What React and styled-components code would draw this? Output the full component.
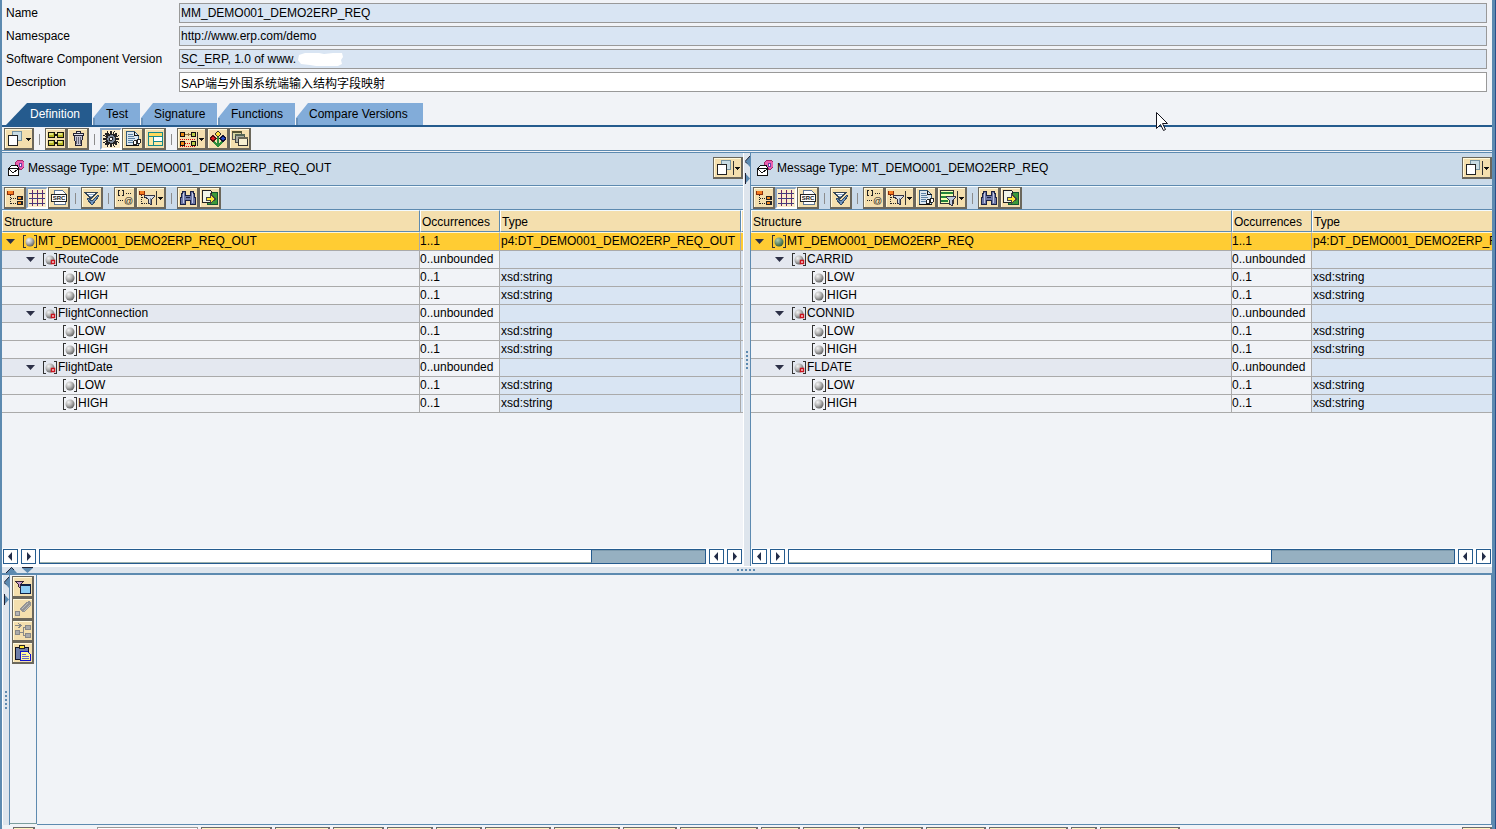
import React, { useState } from 'react';
import styled, { createGlobalStyle, css } from 'styled-components';

const BLUE = '#5d8ab0';
const NAVY = '#255b8e';
const PANEL = '#cadae9';
const PAGE = '#f1f3f7';
const SAND = '#f4dfae';

const GlobalStyle = createGlobalStyle`
  * {
    box-sizing: border-box;
  }
  body {
    margin: 0;
    background: ${PAGE};
  }
  body, input, button, table {
    font: 12px/16px "Liberation Sans", Arial, "Noto Sans CJK SC", sans-serif;
    color: #000;
  }
  svg {
    display: block;
    flex: none;
  }
`;

const Window = styled.div`
  height: 100vh;
  overflow: hidden;
  position: relative;
  display: flex;
  flex-direction: column;
  background: ${PAGE};
  border-left: 2px solid ${BLUE};
  border-right: 1px solid #28508a;
`;

const Content = styled.div`
  flex: 1;
  min-height: 0;
  display: flex;
  flex-direction: column;
  border-right: 3px solid ${BLUE};
`;

const Fields = styled.div`
  display: grid;
  grid-template-columns: 173px 1fr;
  row-gap: 3px;
  align-items: center;
  padding: 3px 5px 11px 4px;
  & label {
    white-space: nowrap;
  }
`;

const FieldBox = styled.div`
  position: relative;
`;

const FieldInput = styled.input`
  display: block;
  width: 100%;
  height: 20px;
  padding: 0 1px;
  border: 1px solid #999;
  border-radius: 0;
  outline: none;
  background: ${(props) => (props.readOnly ? '#d9e5f3' : '#fff')};
`;

const Smudge = styled.svg`
  position: absolute;
  left: 119px;
  top: 3px;
`;

const TabBar = styled.div`
  display: flex;
  height: 24px;
  padding-left: 4px;
  border-bottom: 2px solid ${NAVY};
`;

const Tab = styled.button`
  width: ${(props) => props.$width}px;
  height: 22px;
  padding: 0 0 0 14px;
  border: 0;
  text-align: left;
  white-space: nowrap;
  background: linear-gradient(90deg, #6b93bb 3px, transparent 3px) 0 15px / 3px 7px no-repeat #82acd9;
  clip-path: polygon(1px 15px, 13px 0, 100% 0, 100% 100%, 1px 100%);
  ${(props) =>
    props.$active &&
    css`
      color: #fff;
      padding-left: 24px;
      background: ${NAVY};
      clip-path: polygon(0 100%, 21px 0, 100% 0, 100% 100%);
    `}
`;

const ToolBar = styled.div`
  display: flex;
  align-items: center;
  height: 24px;
  padding: 0 2px;
`;

const MainTools = styled(ToolBar)`
  height: 26px;
  padding-top: 1px;
  border-bottom: 3px double ${BLUE};
`;

const Separator = styled.span`
  width: 11px;
  height: 11px;
  background: linear-gradient(#8c8c8c, #8c8c8c) 5px 0 / 1px 11px no-repeat;
`;

const Tool = styled.button`
  flex: none;
  width: ${(props) => (props.$wide ? 30 : 22)}px;
  height: 22px;
  padding: 0;
  display: flex;
  align-items: center;
  justify-content: center;
  border: 1px solid #6b675c;
  border-right-width: 2px;
  border-bottom-width: 2px;
  background: ${SAND};
  box-shadow: inset 1px 1px #fff8dc;
  ${(props) =>
    props.$pressed &&
    css`
      border: 2px solid;
      border-color: #8aa5c2 #fff #fff #8aa5c2;
      background: #fbedca;
      box-shadow: none;
    `}
`;

const Panes = styled.div`
  flex: 1;
  min-height: 0;
  display: grid;
  grid-template-columns: minmax(0, 1fr) 8px minmax(0, 1fr);
`;

const Pane = styled.section`
  display: flex;
  flex-direction: column;
  min-height: 0;
  overflow: hidden;
`;

const PaneHeader = styled.header`
  display: flex;
  align-items: center;
  gap: 4px;
  height: 33px;
  padding: 0 0 2px 6px;
  background: ${PANEL};
  border-bottom: 1px solid ${BLUE};
  & h2 {
    flex: 1;
    margin: 0;
    font-size: 12px;
    font-weight: 400;
  }
`;

const PaneTools = styled(ToolBar)`
  background: ${PANEL};
  border-top: 1px solid #f3fbff;
  border-bottom: 1px solid ${BLUE};
`;

const TreeTable = styled.table`
  width: 100%;
  table-layout: fixed;
  border-collapse: separate;
  border-spacing: 0;
  white-space: nowrap;
`;

const Th = styled.th`
  height: 22px;
  padding: 2px 0 0 1px;
  text-align: left;
  font-weight: 400;
  overflow: hidden;
  background: ${SAND};
  border-top: 1px solid #f3fbff;
  border-left: 1px solid #fff;
  border-right: ${(props) => (props.$last ? 0 : 1)}px solid ${BLUE};
  border-bottom: 1px solid ${BLUE};
`;

const Tr = styled.tr`
  & td {
    height: 18px;
    padding: 0;
    overflow: hidden;
    line-height: 17px;
    border-right: 1px solid #aaa;
    border-bottom: 1px solid #aaa;
    background: ${PAGE};
  }
  & td:first-child {
    background: ${(props) => (props.$level === 1 ? '#e4e8f0' : PAGE)};
  }
  & td:nth-child(n + 3) {
    padding-left: 1px;
    background: #d9e5f3;
  }
  & td:last-child {
    border-right: 0;
  }
  ${(props) =>
    props.$level === 0 &&
    css`
      && td {
        height: 19px;
        border-top: 1px solid #fff6d5;
        background: #ffcc33;
      }
    `}
`;

const Node = styled.div`
  display: flex;
  align-items: center;
  height: 17px;
  padding-left: ${(props) => props.$level * 20 + 4}px;
`;

const Toggle = styled.button`
  width: 17px;
  height: 16px;
  padding: 0;
  border: 0;
  background: none;
`;

const Blank = styled.span`
  width: 17px;
`;

const ScrollRow = styled.div`
  display: flex;
  align-items: center;
  gap: 3px;
  margin-top: auto;
  padding: 1px 1px 2px;
  background: #fbfcfe;
`;

const ScrollButton = styled.button`
  flex: none;
  display: flex;
  align-items: center;
  justify-content: center;
  width: 15px;
  height: 15px;
  padding: 0;
  border: 1px solid ${NAVY};
  background: #fff;
`;

const Track = styled.div`
  flex: 1;
  display: flex;
  height: 15px;
  border: 1px solid ${NAVY};
  background: #96b0c1;
  box-shadow: inset 0 1px #7e9bae;
`;

const Thumb = styled.div`
  background: #fff;
  border-right: 1px solid ${NAVY};
  border-bottom: 1px solid #9bb0ac;
`;

const VSplitter = styled.div`
  position: relative;
  display: flex;
  flex-direction: column;
  align-items: center;
  justify-content: center;
  background: #dee5ed;
  border-left: 1px solid #fff;
  border-right: 1px solid ${BLUE};
`;

const HSplitter = styled.div`
  position: relative;
  flex: none;
  display: flex;
  align-items: center;
  justify-content: center;
  height: 9px;
  background: #dee5ed;
  border-top: 1px solid #fff;
  border-bottom: 2px solid ${BLUE};
`;

const VArrows = styled.svg`
  position: absolute;
  right: 0;
  top: ${(props) => props.$top}px;
`;

const HArrows = styled.svg`
  position: absolute;
  left: 4px;
  top: 0;
`;

const Lower = styled.div`
  flex: none;
  display: grid;
  grid-template-columns: 8px 27px 1fr;
  height: 254px;
`;

const SideTools = styled.div`
  display: flex;
  flex-direction: column;
  align-items: center;
  height: 249px;
  padding-top: 1px;
  border-right: 1px solid ${BLUE};
  border-bottom: 1px solid #7b9d9d;
`;

const Canvas = styled.div`
  height: 250px;
  border-right: 1px solid ${BLUE};
  border-bottom: 1px solid ${BLUE};
`;

const FunctionBar = styled.div`
  grid-column: 2 / 4;
  display: flex;
  gap: 3px;
  height: 4px;
  padding: 2px 0 0 3px;
  overflow: hidden;
`;

const FunctionButton = styled.button`
  flex: none;
  width: ${(props) => props.$width}px;
  height: 22px;
  padding: 0;
  border: 1px solid #6b6b6b;
  border-right-width: 2px;
  background: #fff3c0;
  &:last-child {
    margin-left: auto;
  }
`;

const CategorySelect = styled.select`
  flex: none;
  width: 101px;
  height: 22px;
  margin-left: 59px;
  appearance: none;
  border: 1px solid #999;
  border-radius: 0;
  background: #fff;
`;

const Cursor = styled.svg`
  position: absolute;
  left: 77.3%;
  top: 112px;
  pointer-events: none;
`;

const drawings = {
  windows: (
    <>
      <path d="M5.500 .5h9v9h-9z" fill="#c8dce4" stroke="#7794a2" />
      <path d="M1.500 4.500h9v10h-9z" fill="#fff" stroke="#222" />
    </>
  ),
  mapping: (
    <>
      <path d="M0 1h7v6H0zM9 1h7v6H9zM0 9h7v6H0zM9 9h7v6H9zM7 3h2v2H7zM7 11h2v2H7z" fill="#16160c" />
      <path d="M1 2h5v4H1zM10 2h5v4h-5zM1 10h5v4H1zM10 10h5v4h-5z" fill="#b8b826" />
      <path d="M1 2h4v2H1zM10 2h4v2h-4zM1 10h4v2H1zM10 10h4v2h-4z" fill="#e4e480" />
    </>
  ),
  trash: (
    <>
      <path d="M4.500 4.500h8l-1 10h-6z" fill="#c5c5d4" stroke="#223" />
      <path d="M3.500 2.500h10v2h-10zM6.500 .5h4v2h-4z" fill="#e4e4ee" stroke="#223" />
      <path d="M6.500 6v7M8.500 6v7M10.500 6v7" stroke="#667" />
    </>
  ),
  gear: (
    <>
      <path
        d="M7 0h2v3H7zM7 13h2v3H7zM0 7h3v2H0zM13 7h3v2h-3zM2 2h2l2 2-2 2-2-3zM14 2v2l-2 2-2-2 2-2zM2 14v-2l2-2 2 2-2 2zM14 14h-2l-2-2 2-2 2 2zM4 0h1l1 3H5zM11 0h1l-1 3h-1zM4 16h1l1-3H5zM11 16h1l-1-3h-1zM0 4v1l3 1V5zM0 11v1l3-1v-1zM16 4v1l-3 1V5zM16 11v1l-3-1v-1z"
        fill="#222"
      />
      <circle cx="8" cy="8" r="4.500" fill="#7a8797" stroke="#222" strokeWidth="1.500" />
      <circle cx="8" cy="8" r="1.500" fill="#fff" stroke="#222" />
    </>
  ),
  textview: (
    <>
      <path d="M1.500 .5h8l4 4v10h-12z" fill="#dbe7ef" stroke="#345b7c" />
      <path d="M9.500 .5v4h4M1 14.500h13" stroke="#111" fill="none" />
      <path d="M3 3.500h5M3 5.500h6M3 7.500h7M3 9.500h5M3 11.500h5" stroke="#5d82a5" />
      <path d="M9.500 9.500h2v4h-3v-3zM12.500 8.500h3v3l-1 1h-2z" fill="#fff" stroke="#222" />
    </>
  ),
  layout: (
    <>
      <path d="M1 1h15v14H1z" fill="#16888c" />
      <path d="M2 2h13v3H2z" fill="#ffd95c" />
      <path d="M2 6h4v8H2z" fill="#ffe9a0" />
      <path d="M7 6h8v4H7z" fill="#fff" />
      <path d="M7 11h8v3H7z" fill="#ffe9a0" />
    </>
  ),
  links: (
    <>
      <path d="M5 3.500h6M8.500 2v3" stroke="#8d7440" />
      <path d="M0 8.500h16M5 12.500h6M0 15.500h16" stroke="#d00" strokeDasharray="1 1" />
      <path d="M0 1h5v5H0zM0 10h5v5H0zM11 1h5v5h-5zM11 10h5v5h-5z" fill="#111" />
      <path d="M1 2h3v3H1zM1 11h3v3H1z" fill="#f08a12" />
      <path d="M12 2h3v3h-3zM12 11h3v3h-3z" fill="#b8cb48" />
    </>
  ),
  flower: (
    <>
      <path d="M8 6v9M3 10l5 5 5-5" stroke="#2c8d3c" strokeWidth="1.500" fill="none" />
      <path d="M8 0l3 3-3 3-3-3z" fill="#ffe03a" stroke="#333" />
      <path d="M3 4.500l3 3-3 3-3-3z" fill="#e32020" stroke="#511" />
      <path d="M13 4.500l3 3-3 3-3-3z" fill="#2449c9" stroke="#113" />
    </>
  ),
  cascade: (
    <>
      <path d="M.5 .5h9v8h-9z" fill="#d7d7a2" stroke="#555" />
      <path d="M0 1h10" stroke="#553" strokeWidth="2" />
      <path d="M3.500 3.500h9v8h-9z" fill="#a8aca2" stroke="#444" />
      <path d="M3 4h10" stroke="#565" strokeWidth="2" />
      <path d="M6.500 6.500h9v8h-9z" fill="#f8efd0" stroke="#333" />
      <path d="M6 7h10" stroke="#665" strokeWidth="2" />
    </>
  ),
  tree: (
    <>
      <path d="M3.500 5v10" stroke="#222" strokeDasharray="1 1" />
      <path d="M4 8.500h6M4 13.500h6" stroke="#222" strokeDasharray="1 1" />
      <path d="M0 1h7v4H0z" fill="#8c2e0c" />
      <path d="M1 1h5v3H1z" fill="#f47b20" />
      <path d="M10 6h6v4h-6zM10 11h6v4h-6z" fill="#222" />
      <path d="M11 7h3v2h-3zM11 12h3v2h-3z" fill="#f48a20" />
    </>
  ),
  grid: (
    <>
      <path d="M3.500 0v16M8.500 0v16M13.500 0v16" stroke="#6d2466" />
      <path d="M0 3.500h16M0 8.500h16M0 13.500h16" stroke="#40407e" />
    </>
  ),
  source: (
    <>
      <path d="M3.500 .5h8l3 3v11h-11z" fill="#fff" stroke="#5d7594" />
      <path d="M.5 4.500h15v7H.5z" fill="#fff" stroke="#222" />
      <text x="8" y="10" textAnchor="middle" fontSize="6" fontWeight="700" fill="#111">
        SRC
      </text>
    </>
  ),
  expand: (
    <>
      <path d="M1 2.500h12l-6 6z" fill="#fff" stroke="#345" />
      <path d="M4 8l4 3 6-6 1 1-7 9-5-6z" fill="#6f94bd" stroke="#334b66" />
      <path d="M4 4.500h6M6 6.500h2" stroke="#8aa9ca" />
    </>
  ),
  attributes: (
    <>
      <path d="M3 .5H1.500v5H3M5 .5h1.500v5H5" stroke="#222" fill="none" />
      <path d="M9 3.500h6M1 10.500h6" stroke="#222" strokeDasharray="1 1" />
      <text x="7" y="14" fontSize="9" fill="#222">
        @
      </text>
    </>
  ),
  filterTree: (
    <>
      <path d="M2.500 5v10M3 7.500h3M3 13.500h5" stroke="#222" strokeDasharray="1 1" />
      <path d="M0 1h6v4H0z" fill="#8c2e0c" />
      <path d="M1 1h4v3H1z" fill="#f47b20" />
      <path d="M5.500 5.500h10v1l-3 3v5l-3-1v-4l-4-3z" fill="#d6dde4" stroke="#334" />
      <path d="M11.500 8v6" stroke="#7888a0" />
    </>
  ),
  filterTable: (
    <>
      <path d="M.5 .5h13v13H.5z" fill="#f4ffb0" stroke="#333" />
      <path d="M1 3h12M1 7h6M1 11h7" stroke="#24843c" strokeWidth="2" />
      <path d="M6.500 6.500h9v1l-3 3v5l-3-1v-4l-3-3z" fill="#bcc8dc" stroke="#334" />
    </>
  ),
  binoculars: (
    <>
      <path d="M2.500 1.500h3v4h5v-4h3l2 8v5h-5v-4h-5v4h-5v-5z" fill="#6c76a5" stroke="#1c2242" />
      <path d="M3 3v10M12 3v10" stroke="#c3c9e2" />
      <path d="M6 7h4" stroke="#1c2242" />
    </>
  ),
  exportDoc: (
    <>
      <path d="M5.500 2.500h10v12h-10z" fill="#3c9a38" stroke="#153" />
      <path d="M.5 .5h8l1 1v11h-9z" fill="#f2f6e8" stroke="#222" />
      <path d="M4 7h4V3.500L13.500 9 8 14v-3.500H4z" fill="#ffe836" stroke="#444" />
    </>
  ),
  filterWindow: (
    <>
      <path d="M5.500 5.500h10v9h-10z" fill="#8ccdf4" stroke="#124" />
      <path d="M5 5.500h11" stroke="#124" strokeWidth="2" />
      <path d="M.5 2.500h8l-3 3v4l-2-2v-2z" fill="#c79acb" stroke="#323" />
    </>
  ),
  marker: (
    <>
      <path d="M4 8l6-6 4-2 2 2v3l-7 6H7z" fill="#949494" />
      <path d="M7 8l6-6M9 10l6-6" stroke="#bdbdbd" />
      <path d="M.5 10.500h4v4h-4z" fill="#b5b5b5" stroke="#888" />
    </>
  ),
  sourceTree: (
    <>
      <path d="M0 2.500h6M3.500 .5L6 2.500 3.500 5M5 9.500h3M8.500 4v9M8 4.500h3M8 12.500h3" stroke="#888" fill="none" />
      <path d="M.5 7.500h4v4h-4zM10.500 2.500h5v4h-5zM10.500 10.500h5v4h-5z" fill="#aaa" stroke="#888" />
    </>
  ),
  clipboard: (
    <>
      <path d="M.5 2.500h13v12H.5z" fill="#6e7ea8" stroke="#112" />
      <path d="M4.500 .5h5v3h-5z" fill="#ffe836" stroke="#222" />
      <path d="M5.500 6.500h7l3 3v6h-10z" fill="#fff79a" stroke="#11c" />
      <path d="M7 9.500h4M7 11.500h7M7 13.500h7" stroke="#66c" />
    </>
  ),
  message: (
    <>
      <path d="M7 3l3-3h4l2 2v5l-3 3-3-2z" fill="#ec5fae" stroke="#a02868" />
      <path d="M11 3h2v3h-2z" fill="#fff" stroke="#6a3fa8" />
      <path d="M.5 8.500l3-3h6l1 3v7H.5z" fill="#fff" stroke="#111" />
      <path d="M1 9.500l4 3 5-3M1 8.500h9" fill="none" stroke="#111" />
    </>
  ),
};

const Icon = ({ name }) => (
  <svg width="16" height="16" viewBox="0 0 16 16" fill="none" shapeRendering="crispEdges" aria-hidden="true">
    {drawings[name]}
  </svg>
);

const ToolButton = ({ icon, label, drop, split, pressed }) => (
  <Tool type="button" aria-label={label} title={label} $wide={drop} $pressed={pressed}>
    <Icon name={icon} />
    {drop && (
      <svg width="8" height="16" shapeRendering="crispEdges" aria-hidden="true">
        {split && <path d="M1.500 1v14" stroke="#333" />}
        <path d="M3 7h5v1H7v1H6v1H5V9H4V8H3z" fill="#111" />
      </svg>
    )}
  </Tool>
);

const renderTools = (items) =>
  items.map((item, i) => (item ? <ToolButton key={item.label} {...item} /> : <Separator key={`sep-${i}`} />));

const mainTools = [
  { icon: 'windows', label: 'Switch view', drop: true },
  null,
  { icon: 'mapping', label: 'Map selected fields' },
  { icon: 'trash', label: 'Delete' },
  null,
  { icon: 'gear', label: 'Show functions', pressed: true },
  { icon: 'textview', label: 'Text preview' },
  { icon: 'layout', label: 'Layout' },
  null,
  { icon: 'links', label: 'Dependencies', drop: true, split: true },
  { icon: 'flower', label: 'Documentation' },
  { icon: 'cascade', label: 'Cascade' },
];

const baseTools = [
  { icon: 'tree', label: 'Tree' },
  { icon: 'grid', label: 'Grid', pressed: true },
  { icon: 'source', label: 'Source' },
  null,
  { icon: 'expand', label: 'Expand' },
  null,
  { icon: 'attributes', label: 'Attributes' },
  { icon: 'filterTree', label: 'Filter tree', drop: true, split: true },
];

const searchTools = [null, { icon: 'binoculars', label: 'Find' }, { icon: 'exportDoc', label: 'Export' }];

const targetTools = [
  { icon: 'textview', label: 'Text view' },
  { icon: 'filterTable', label: 'Filter table', drop: true, split: true },
];

const sideTools = [
  { icon: 'filterWindow', label: 'Filter window' },
  { icon: 'marker', label: 'Mark' },
  { icon: 'sourceTree', label: 'Insert source' },
  { icon: 'clipboard', label: 'Paste' },
];

const tabs = [
  { name: 'Definition', width: 86 },
  { name: 'Test', width: 48 },
  { name: 'Signature', width: 77 },
  { name: 'Functions', width: 78 },
  { name: 'Compare Versions', width: 128 },
];

const functionWidths = [71, 55, 51, 46, 46, 66, 66, 54, 78, 39, 57, 60, 60, 79, 26, 80, 30];

const buildRows = (root, type, groups) => [
  { name: root, level: 0, occurs: '1..1', type },
  ...groups.flatMap((name) => [
    { name, level: 1, occurs: '0..unbounded', type: '' },
    { name: 'LOW', level: 2, occurs: '0..1', type: 'xsd:string' },
    { name: 'HIGH', level: 2, occurs: '0..1', type: 'xsd:string' },
  ]),
];

const NodeIcon = ({ repeated, mapped }) => (
  <svg width="15" height="14" viewBox="0 0 15 14" aria-hidden="true">
    <defs>
      <radialGradient id="ball" cx="35%" cy="30%" r="75%">
        <stop offset="0" stopColor="#f4f4f4" />
        <stop offset=".5" stopColor="#b4b4b4" />
        <stop offset="1" stopColor="#5c5c5c" />
      </radialGradient>
      <radialGradient id="greenBall" cx="35%" cy="30%" r="75%">
        <stop offset="0" stopColor="#b4cfae" />
        <stop offset="1" stopColor="#2f5a38" />
      </radialGradient>
    </defs>
    <path d="M3 .5H.5v12H3M11 .5h2.500v12H11" stroke="#333" fill="none" shapeRendering="crispEdges" />
    <circle cx="7" cy="7" r="4.500" fill={mapped ? 'url(#greenBall)' : 'url(#ball)'} />
    {repeated && <path d="M8.500 7.500h3v3h-3z" fill="#fff" stroke="#c8141e" strokeWidth="1.500" />}
  </svg>
);

const splitDots = [0, 4, 8, 12, 16];

const SplitArrows = ({ top }) => (
  <VArrows $top={top} width="5" height="28" aria-hidden="true">
    <path d="M5 0v11L0 5.500z" fill={BLUE} />
    <path d="M5 0L0 5.500 2 7.500" stroke="#223" fill="none" />
    <path d="M0 17v11l5-5.500z" fill={BLUE} />
    <path d="M.5 28V17" stroke="#223" />
  </VArrows>
);

const VerticalDots = () => (
  <svg width="4" height="18" shapeRendering="crispEdges" aria-hidden="true">
    {splitDots.map((y) => (
      <path key={y} d={`M1 ${y}h2v2H1z`} fill={BLUE} />
    ))}
  </svg>
);

const ScrollArrow = ({ label, left }) => (
  <ScrollButton type="button" aria-label={label}>
    <svg width="5" height="9" aria-hidden="true">
      <path d={left ? 'M4 0v9L0 4.500z' : 'M1 0v9l4-4.500z'} fill="#222c48" />
    </svg>
  </ScrollButton>
);

const ScrollBar = ({ thumb }) => (
  <ScrollRow>
    <ScrollArrow label="Scroll left" left />
    <ScrollArrow label="Scroll right" />
    <Track>
      <Thumb style={{ width: `${thumb}%` }} />
    </Track>
    <ScrollArrow label="Page left" left />
    <ScrollArrow label="Page right" />
  </ScrollRow>
);

const MessagePane = ({ title, rows, tools, typeWidth, filler, mapped, thumb }) => (
  <Pane>
    <PaneHeader>
      <Icon name="message" />
      <h2>Message Type: {title}</h2>
      <ToolButton icon="windows" label="Switch view" drop split />
    </PaneHeader>
    <PaneTools>{renderTools(tools)}</PaneTools>
    <TreeTable>
      <colgroup>
        <col />
        <col width="80" />
        <col width={typeWidth} />
        {filler && <col width="2" />}
      </colgroup>
      <thead>
        <tr>
          <Th>Structure</Th>
          <Th>Occurrences</Th>
          <Th $last={!filler}>Type</Th>
          {filler && <Th $last aria-hidden="true" />}
        </tr>
      </thead>
      <tbody>
        {rows.map((row, i) => (
          <Tr key={i} $level={row.level}>
            <td>
              <Node $level={row.level}>
                {row.level < 2 ? (
                  <Toggle type="button" aria-label={`Collapse ${row.name}`}>
                    <svg width="9" height="5" aria-hidden="true">
                      <path d="M0 0h9L4.500 5z" fill="#2c3047" />
                    </svg>
                  </Toggle>
                ) : (
                  <Blank />
                )}
                <NodeIcon repeated={row.level === 1} mapped={mapped && row.level === 0} />
                {row.name}
              </Node>
            </td>
            <td>{row.occurs}</td>
            <td>{row.type}</td>
            {filler && <td aria-hidden="true" />}
          </Tr>
        ))}
      </tbody>
    </TreeTable>
    <ScrollBar thumb={thumb} />
  </Pane>
);

const App = () => {
  const [activeTab, setActiveTab] = useState('Definition');
  const [description, setDescription] = useState('SAP端与外围系统端输入结构字段映射');

  return (
    <Window>
      <GlobalStyle />
      <Content>
        <Fields>
          <label htmlFor="name">Name</label>
          <FieldInput id="name" readOnly value="MM_DEMO001_DEMO2ERP_REQ" />
          <label htmlFor="namespace">Namespace</label>
          <FieldInput id="namespace" readOnly value="http://www.erp.com/demo" />
          <label htmlFor="version">Software Component Version</label>
          <FieldBox>
            <FieldInput id="version" readOnly value="SC_ERP, 1.0 of www." />
            <Smudge width="46" height="15" aria-hidden="true">
              <path d="M1 3l6-2h14l5 1 9-1h9l1 4-2 3 1 4-4 2H18l-6-1-9-1-3-4z" fill="#fff" />
            </Smudge>
          </FieldBox>
          <label htmlFor="description">Description</label>
          <FieldInput id="description" value={description} onChange={(e) => setDescription(e.target.value)} />
        </Fields>
        <TabBar role="tablist">
          {tabs.map((tab) => (
            <Tab
              key={tab.name}
              type="button"
              role="tab"
              aria-selected={tab.name === activeTab}
              $width={tab.width}
              $active={tab.name === activeTab}
              onClick={() => setActiveTab(tab.name)}
            >
              {tab.name}
            </Tab>
          ))}
        </TabBar>
        <MainTools>{renderTools(mainTools)}</MainTools>
        <Panes>
          <MessagePane
            title="MT_DEMO001_DEMO2ERP_REQ_OUT"
            rows={buildRows('MT_DEMO001_DEMO2ERP_REQ_OUT', 'p4:DT_DEMO001_DEMO2ERP_REQ_OUT', [
              'RouteCode',
              'FlightConnection',
              'FlightDate',
            ])}
            tools={[...baseTools, ...searchTools]}
            typeWidth={241}
            filler
            thumb={83}
          />
          <VSplitter>
            <SplitArrows top={3} />
            <VerticalDots />
          </VSplitter>
          <MessagePane
            title="MT_DEMO001_DEMO2ERP_REQ"
            rows={buildRows('MT_DEMO001_DEMO2ERP_REQ', 'p4:DT_DEMO001_DEMO2ERP_REQ', ['CARRID', 'CONNID', 'FLDATE'])}
            tools={[...baseTools, ...targetTools, ...searchTools]}
            typeWidth={180}
            mapped
            thumb={72.6}
          />
        </Panes>
        <HSplitter>
          <HArrows width="28" height="6" aria-hidden="true">
            <path d="M0 6h11L5.500 0z" fill={BLUE} />
            <path d="M0 6l5.500-5.500L8 3" stroke="#223" fill="none" />
            <path d="M16 1h11l-5.500 5z" fill={BLUE} />
            <path d="M16 .5h11" stroke="#223" />
          </HArrows>
          <svg width="20" height="3" shapeRendering="crispEdges" aria-hidden="true">
            {splitDots.map((x) => (
              <path key={x} d={`M${x} 0h2v2h-2z`} fill={BLUE} />
            ))}
          </svg>
        </HSplitter>
        <Lower>
          <VSplitter>
            <SplitArrows top={2} />
            <VerticalDots />
          </VSplitter>
          <SideTools>{renderTools(sideTools)}</SideTools>
          <Canvas />
          <FunctionBar>
            <FunctionButton type="button" aria-label="Toggle functions" $width={22} />
            <CategorySelect aria-label="Function category" />
            {functionWidths.map((width, i) => (
              <FunctionButton key={i} type="button" aria-label={`Function ${i + 1}`} $width={width} />
            ))}
          </FunctionBar>
        </Lower>
      </Content>
      <Cursor width="13" height="20" viewBox="0 0 13 20" aria-hidden="true">
        <path d="M.5 .5v16l4-4 3 6 2-1-3-6h5z" fill="#fff" stroke="#15151f" />
      </Cursor>
    </Window>
  );
};

export default App;
